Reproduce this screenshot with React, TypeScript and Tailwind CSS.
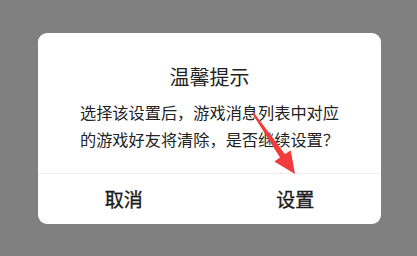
import React from 'react';

const font = { fontFamily: '"Noto Sans CJK SC", "Noto Sans", sans-serif' };

export default function App() {
  return (
    <div className="relative h-[256px] w-[417px] overflow-hidden bg-[#808080] pl-[38px] pt-[33px]" style={font}>
      <div className="flex h-[191px] w-[343px] flex-col rounded-[9px] bg-white text-[#222222]">
        <div className="pt-[30px] text-center text-[20px] leading-[28px]">温馨提示</div>
        <div className="mt-[8px] whitespace-nowrap pl-[42px] text-left text-[16.2px] leading-[27px]">
          <div>选择该设置后，游戏消息列表中对应</div>
          <div>的游戏好友将清除，是否继续设置？</div>
        </div>
        <div className="mt-auto flex h-[51px] border-t border-[#efefef]">
          <div className="flex flex-1 items-center justify-center text-[19px] text-[#1a1a1a] [-webkit-text-stroke:0.35px_#1a1a1a]">取消</div>
          <div className="flex flex-1 items-center justify-center text-[19px] text-[#1a1a1a] [-webkit-text-stroke:0.35px_#1a1a1a]">设置</div>
        </div>
      </div>
      {/* red annotation arrow */}
      <svg className="absolute left-0 top-0" width="417" height="256" viewBox="0 0 417 256">
        <polygon
          points="252.2,113.6 253.8,112.4 285,154.2 290.7,150.2 295,174 274.3,161.6 280,157.6"
          fill="#f23b3b"
        />
      </svg>
    </div>
  );
}
